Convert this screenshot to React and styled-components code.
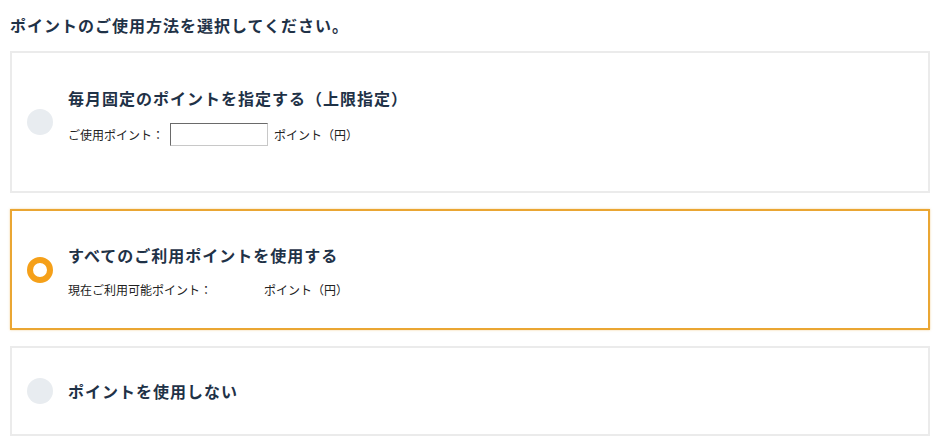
import styled, { createGlobalStyle } from "styled-components";

const GlobalStyle = createGlobalStyle`
  body {
    margin: 0;
    background: #fff;
    font-family: "Noto Sans CJK JP", "Noto Sans", sans-serif;
  }
`;

const Page = styled.div`
  padding: 13px 12px 10px 10px;
  display: flex;
  flex-direction: column;
  gap: 16px;
`;

const Heading = styled.h2`
  margin: 0 0 -2px;
  font-size: 16px;
  line-height: 24px;
  font-weight: 700;
  letter-spacing: 1px;
  color: #1f3247;
`;

const Card = styled.label`
  display: flex;
  align-items: center;
  gap: 15px;
  padding: ${(p) => p.$pad};
  border: 2px solid ${(p) => (p.$active ? "#eaa633" : "#ebebeb")};
  box-shadow: ${(p) => (p.$active ? "0 0 2px rgba(234,166,51,0.5)" : "none")};
  cursor: pointer;
`;

const Radio = styled.span`
  flex: none;
  width: 26px;
  height: 26px;
  border-radius: 50%;
  box-sizing: border-box;
  background: ${(p) => (p.$checked ? "#fff" : "#e8ecf0")};
  border: ${(p) => (p.$checked ? "6.5px solid #f5a019" : "none")};
`;

const Body = styled.div`
  display: flex;
  flex-direction: column;
  gap: 13px;
  padding: ${(p) => p.$pad || "0"};
`;

const Title = styled.div`
  font-size: 16px;
  line-height: 24px;
  font-weight: 700;
  letter-spacing: 1px;
  color: #1f3247;
`;

const Row = styled.div`
  display: flex;
  align-items: center;
  font-size: 12px;
  line-height: 20px;
  color: #222;
`;

const PointInput = styled.input`
  width: 98px;
  height: 23px;
  box-sizing: border-box;
  margin: 0 6px 0 6px;
  padding: 2px 4px;
  border: 1px solid #c8c8c8;
  border-top-color: #6a6a6a;
  border-left-color: #6a6a6a;
  font-size: 12px;
  outline: none;
`;

const Value = styled.span`
  display: inline-block;
  width: 52px;
`;

export default function App() {
  return (
    <>
      <GlobalStyle />
      <Page>
        <Heading>ポイントのご使用方法を選択してください。</Heading>

        <Card $pad="33px 16px 33px 15px">
          <Radio />
          <Body $pad="0 0 12px">
            <Title>毎月固定のポイントを指定する（上限指定）</Title>
            <Row>
              ご使用ポイント：
              <PointInput type="text" />
              ポイント（円）
            </Row>
          </Body>
        </Card>

        <Card $active $pad="29px 16px 28px 15px">
          <Radio $checked />
          <Body $pad="3px 0 0">
            <Title>すべてのご利用ポイントを使用する</Title>
            <Row>
              現在ご利用可能ポイント：
              <Value />
              ポイント（円）
            </Row>
          </Body>
        </Card>

        <Card $pad="30px 16px 30px 15px">
          <Radio />
          <Body>
            <Title>ポイントを使用しない</Title>
          </Body>
        </Card>
      </Page>
    </>
  );
}
